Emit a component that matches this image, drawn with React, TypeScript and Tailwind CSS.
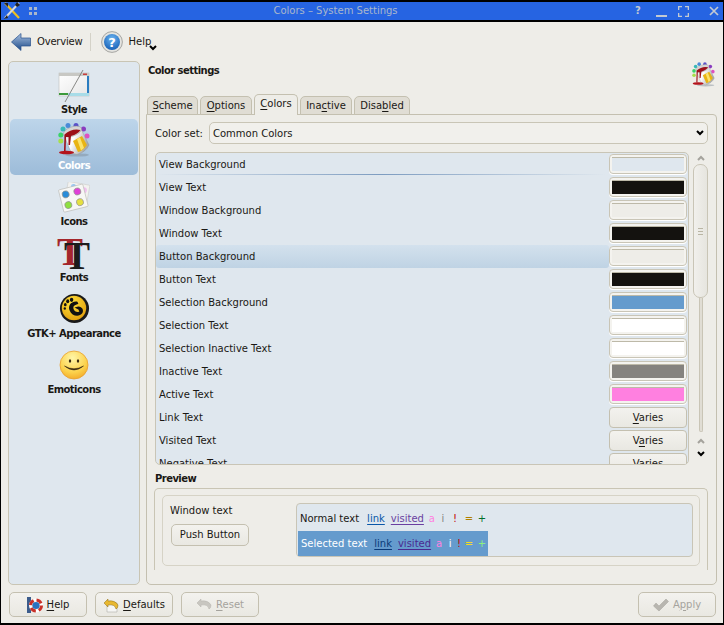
// Farbeinstellungen im KDE-Stil: Seitenleiste, Reiter, Farbliste und Vorschau.
import type { ReactNode } from 'react'

const FONT = 'font-["DejaVu_Sans",sans-serif]'

function Mn({ children }: { children: ReactNode }) {
  return <span className="underline underline-offset-2">{children}</span>
}

function BucketIcon({ size = 32, className = '' }: { size?: number; className?: string }) {
  return (
    <svg width={size} height={size + 2} viewBox="0 0 32 34" className={className}>
      <defs>
        <linearGradient id="bucketBody" x1="0" y1="0" x2="1" y2="0.4">
          <stop offset="0" stopColor="#d8d8d8" />
          <stop offset="0.45" stopColor="#ffffff" />
          <stop offset="1" stopColor="#a8a8a8" />
        </linearGradient>
      </defs>
      <circle cx="2.8" cy="12" r="2.5" fill="#38d36a" />
      <circle cx="2.8" cy="18" r="2.5" fill="#a6e04a" />
      <circle cx="5" cy="6" r="2.5" fill="#38b8b8" />
      <circle cx="10" cy="2.6" r="2.5" fill="#4a8ad8" />
      <circle cx="18" cy="2.6" r="2.5" fill="#5a52c8" />
      <circle cx="25.5" cy="6" r="2.5" fill="#8a3cc0" />
      <circle cx="29" cy="13" r="2.5" fill="#e050c0" />
      <ellipse cx="19" cy="32" rx="12" ry="1.6" fill="#7c8a96" opacity="0.45" />
      <path d="M6 12 L23 6 L31 22 Q28 29 19 31.5 Q14 31 12 27 Z" fill="url(#bucketBody)" stroke="#8a8a8a" strokeWidth="0.4" />
      <path d="M15 18 L24 13 L29 22 Q25 28 20 29 Z" fill="#e8b414" />
      <path d="M19 16 L22 14.5 L26 25 L23 27.5 Z" fill="#fbe36c" />
      <ellipse cx="14.5" cy="8.5" rx="9.5" ry="4.6" transform="rotate(-20 14.5 8.5)" fill="#d6d6d4" stroke="#909090" strokeWidth="0.4" />
      <path d="M6.5 11.5 Q14 5 22.5 7 Q20 11 13 13 L12 22 L10.5 22 L10.5 14 L8 14 L7.6 28 L6 28 Z" fill="#9c1018" />
      <ellipse cx="8.5" cy="29.5" rx="7.5" ry="1.8" fill="#b4141c" />
    </svg>
  )
}

function StyleIcon() {
  return (
    <svg width="32" height="32" viewBox="0 1 32 32">
      <defs>
        <linearGradient id="styleWin" x1="0" y1="0" x2="1" y2="1">
          <stop offset="0" stopColor="#ffffff" />
          <stop offset="1" stopColor="#e6e6e6" />
        </linearGradient>
      </defs>
      <rect x="1" y="4" width="30" height="23" fill="url(#styleWin)" stroke="#c0c0bc" strokeWidth="0.6" />
      <rect x="1" y="4" width="30" height="3" fill="#c8c8c4" />
      <rect x="25" y="4.5" width="4" height="1.5" fill="#c83c3c" />
      <rect x="29" y="7" width="2" height="17" fill="#2a7cc0" />
      <rect x="10" y="24" width="21" height="3" fill="#a8dce8" />
      <rect x="1" y="24" width="9" height="2" fill="#3c9a3c" />
      <path d="M25 1 L7 33" stroke="#7c7c78" strokeWidth="0.9" />
    </svg>
  )
}

function IconsIcon() {
  return (
    <svg width="32" height="32" viewBox="0 1 32 32">
      <g transform="rotate(10 18 14)">
        <rect x="8" y="2" width="22" height="22" rx="1" fill="#f2f2f0" stroke="#c8c8c4" strokeWidth="0.5" />
        <circle cx="14" cy="6" r="2.5" fill="#9cc8f0" />
        <circle cx="25" cy="8" r="3" fill="#f0c0ee" />
      </g>
      <g transform="rotate(-14 14 18)">
        <rect x="3" y="6" width="25" height="23" rx="1" fill="#f7f7f5" stroke="#b8b8b4" strokeWidth="0.6" />
        <circle cx="9" cy="12" r="3.4" fill="#2a8cd8" stroke="#8c8c88" strokeWidth="0.7" />
        <circle cx="21" cy="12" r="3.4" fill="#e040d8" stroke="#8c8c88" strokeWidth="0.7" />
        <circle cx="9" cy="23" r="3.4" fill="#8fe040" stroke="#8c8c88" strokeWidth="0.7" />
        <circle cx="21" cy="23" r="3.4" fill="#e6e040" stroke="#8c8c88" strokeWidth="0.7" />
      </g>
    </svg>
  )
}

function FontsIcon() {
  // Die beiden T sind echter Text, nur versetzt gesetzt.
  return (
    <div className="relative h-8 w-8 font-['Liberation_Serif',serif] text-[39px] font-bold leading-8 tracking-normal">
      <span className="absolute -left-[1px] -top-[2px] text-[#a4262c]">T</span>
      <span className="absolute left-[6px] top-[2px] text-[#1c1c1c]">T</span>
    </div>
  )
}

function GtkIcon() {
  return (
    <svg width="31" height="31" viewBox="0 0 32 32" className="-mt-[1px]">
      <defs>
        <radialGradient id="gtkBall" cx="0.4" cy="0.3" r="0.8">
          <stop offset="0" stopColor="#ffe23c" />
          <stop offset="1" stopColor="#e09a08" />
        </radialGradient>
      </defs>
      <circle cx="16" cy="16" r="15" fill="#1a1a1a" />
      <circle cx="15.5" cy="15.5" r="12.6" fill="url(#gtkBall)" />
      <ellipse cx="13" cy="7" rx="1.8" ry="2.2" fill="#111" />
      <ellipse cx="9" cy="8.5" rx="1.6" ry="2" fill="#111" />
      <ellipse cx="6.5" cy="12" rx="1.4" ry="1.7" fill="#111" />
      <ellipse cx="6" cy="16" rx="1.2" ry="1.4" fill="#111" />
      <path d="M19 9 C12 8 9 14 11 18 C13 24 21 25 24 21 C26 18 24 14 20 14 L16 15 L20 17 L21 19 C18 21 14 18 15 14 C16 12 19 12 20 11 Z" fill="#111" />
    </svg>
  )
}

function SmileIcon() {
  return (
    <svg width="32" height="32" viewBox="0 1 32 32">
      <defs>
        <radialGradient id="smileBall" cx="0.45" cy="0.25" r="0.85">
          <stop offset="0" stopColor="#fff6a8" />
          <stop offset="0.6" stopColor="#fcd24c" />
          <stop offset="1" stopColor="#f0a020" />
        </radialGradient>
      </defs>
      <circle cx="16" cy="16" r="14" fill="url(#smileBall)" stroke="#e8a030" strokeWidth="0.8" />
      <ellipse cx="12" cy="12" rx="1.2" ry="1.8" fill="#3a2a10" />
      <ellipse cx="20" cy="12" rx="1.2" ry="1.8" fill="#3a2a10" />
      <path d="M6.5 17 Q16 25 25.5 17 Q16 22.5 6.5 17 Z" fill="#3a2a10" stroke="#3a2a10" strokeWidth="0.5" />
    </svg>
  )
}

function ToolsIcon() {
  return (
    <svg width="18" height="18" viewBox="0 0 18 18">
      <path d="M2 1 L16 16" stroke="#f0c020" strokeWidth="2.2" />
      <path d="M16 1 L2 16" stroke="#d8d8d8" strokeWidth="2" />
      <path d="M1 1 L5 1 L5 5 Z" fill="#222" />
      <path d="M14 0 L17 3 L14 5 L12 3 Z" fill="#222" />
      <path d="M4 13 L1 17 L5 16 Z" fill="#222" />
    </svg>
  )
}

function BackArrow() {
  return (
    <svg width="20" height="20" viewBox="0 0 20 20">
      <defs>
        <linearGradient id="backArrow" x1="0" y1="0" x2="0" y2="1">
          <stop offset="0" stopColor="#a8c0e0" />
          <stop offset="1" stopColor="#1c4a88" />
        </linearGradient>
      </defs>
      <path d="M0.5 10 L10 1.5 L10 6 L19.5 6 L19.5 14 L10 14 L10 18.5 Z" fill="url(#backArrow)" stroke="#28528c" strokeWidth="0.7" />
    </svg>
  )
}

function HelpCircle() {
  return (
    <svg width="22" height="22" viewBox="0 0 22 22">
      <defs>
        <radialGradient id="helpBall" cx="0.5" cy="0.3" r="0.8">
          <stop offset="0" stopColor="#6cb4f0" />
          <stop offset="1" stopColor="#0c56b0" />
        </radialGradient>
      </defs>
      <circle cx="11" cy="11" r="10.4" fill="#e4e4e0" stroke="#8a8a86" strokeWidth="0.7" />
      <circle cx="11" cy="11" r="8" fill="url(#helpBall)" />
      <text x="11" y="15.5" textAnchor="middle" fontSize="13" fontWeight="700" fill="#fff" fontFamily="DejaVu Sans">?</text>
    </svg>
  )
}

function LifeBuoy() {
  return (
    <svg width="16" height="16" viewBox="0 0 16 16">
      <rect x="0" y="0" width="4" height="16" fill="#3c5c8c" />
      <circle cx="9" cy="8.5" r="5.5" fill="none" stroke="#ffffff" strokeWidth="3" />
      <circle cx="9" cy="8.5" r="5.5" fill="none" stroke="#c83028" strokeWidth="3" strokeDasharray="5.6 3" />
      <circle cx="9" cy="8.5" r="3.6" fill="#2a72c0" />
    </svg>
  )
}

function UndoIcon({ muted = false }: { muted?: boolean }) {
  const farbe = muted ? '#c8c6c0' : '#e8b830'
  return (
    <svg width="16" height="16" viewBox="0 0 16 16">
      {!muted && <path d="M4 6 L14 6 L14 15 L4 15 Z" fill="#f6f6f4" stroke="#b0b0aa" strokeWidth="0.6" />}
      <path d="M1 6 L5 2 L5 4 Q12 3 15 8 Q15 11 13 12 Q12 7 5 8 L5 10 Z" fill={farbe} stroke={muted ? '#b4b2ac' : '#8a6a14'} strokeWidth="0.5" />
    </svg>
  )
}

function CheckIcon() {
  return (
    <svg width="16" height="14" viewBox="0 0 16 14">
      <path d="M0.5 8 L3 5 L6 8 L13 1 L15.5 3.5 L6 13 Z" fill="#b8b6b0" stroke="#a4a29c" strokeWidth="0.5" />
    </svg>
  )
}

function Chevron({ up = false, className = '' }: { up?: boolean; className?: string }) {
  return (
    <svg width="8" height="6" viewBox="0 0 8 6" className={className}>
      <path d={up ? 'M1 5 L4 2 L7 5' : 'M1 1 L4 4 L7 1'} fill="none" stroke="currentColor" strokeWidth="2" />
    </svg>
  )
}

const seitenleiste: { label: string; icon: ReactNode; aktiv?: boolean }[] = [
  { label: 'Style', icon: <StyleIcon /> },
  { label: 'Colors', icon: <BucketIcon className="-mt-[3px]" />, aktiv: true },
  { label: 'Icons', icon: <IconsIcon /> },
  { label: 'Fonts', icon: <FontsIcon /> },
  { label: 'GTK+ Appearance', icon: <GtkIcon /> },
  { label: 'Emoticons', icon: <SmileIcon /> },
]

const farben: { label: string; farbe?: string; knopf?: ReactNode }[] = [
  { label: 'View Background', farbe: '#dfe7ee' },
  { label: 'View Text', farbe: '#14120f' },
  { label: 'Window Background', farbe: '#eeede8' },
  { label: 'Window Text', farbe: '#14120f' },
  { label: 'Button Background', farbe: '#eeede8' },
  { label: 'Button Text', farbe: '#14120f' },
  { label: 'Selection Background', farbe: '#659bcd' },
  { label: 'Selection Text', farbe: '#ffffff' },
  { label: 'Selection Inactive Text', farbe: '#ffffff' },
  { label: 'Inactive Text', farbe: '#85837f' },
  { label: 'Active Text', farbe: '#ff80e0' },
  { label: 'Link Text', knopf: <><Mn>V</Mn>aries</> },
  { label: 'Visited Text', knopf: <>V<Mn>a</Mn>ries</> },
  { label: 'Negative Text', knopf: <>Varies</> },
]

function Swatch({ farbe }: { farbe: string }) {
  return (
    <div className="-mt-px flex h-[20px] w-[78px] rounded-[4px] border border-[#c9c5b6] bg-[#f4f3ef] p-[2px] shadow-[0_1px_0_#ffffff]">
      <div className="flex-1 border-t border-[#bdb9a8]" style={{ backgroundColor: farbe }} />
    </div>
  )
}

function KnopfRahmen({ children, breite, gedimmt }: { children: ReactNode; breite: string; gedimmt?: boolean }) {
  return (
    <button
      className={`flex h-[25px] items-center justify-center gap-[4px] rounded-[5px] border border-[#c4c0b0] bg-gradient-to-b from-[#f3f2ee] to-[#e9e8e2] ${breite} ${gedimmt ? 'text-[#a5a39d]' : 'text-[#1a1814]'}`}
    >
      {children}
    </button>
  )
}

const reiter = [
  { text: <><Mn>S</Mn>cheme</>, breite: 'w-[51px]' },
  { text: <><Mn>O</Mn>ptions</>, breite: 'w-[52px]' },
  { text: <><Mn>C</Mn>olors</>, breite: 'w-[44px]', aktiv: true },
  { text: <>Ina<Mn>c</Mn>tive</>, breite: 'w-[52px]' },
  { text: <>Disa<Mn>b</Mn>led</>, breite: 'w-[56px]' },
]

const BOLD = 'font-bold tracking-[-0.55px]'

export default function App() {
  return (
    <div className={`flex h-[625px] w-[724px] flex-col overflow-hidden border-x border-t-2 border-b-2 border-black bg-[#eeede8] text-[10px] leading-none text-[#1a1814] ${FONT}`}>
      {/* Titelleiste */}
      <div className="flex h-[18px] shrink-0 items-center bg-[#2664e2] text-[#a9b7cb]">
        <div className="ml-[2px] flex w-[18px] justify-center"><ToolsIcon /></div>
        <div className="ml-[8px] grid grid-cols-2 gap-[2px]">
          <span className="h-[3px] w-[3px] bg-[#a9b7cb]" />
          <span className="h-[3px] w-[3px] bg-[#a9b7cb]" />
          <span className="h-[3px] w-[3px] bg-[#a9b7cb]" />
          <span className="h-[3px] w-[3px] bg-[#a9b7cb]" />
        </div>
        <div className="flex-1 text-center">Colors – System Settings</div>
        <div className="flex items-center text-[#c3cad2]">
          <span className="w-[8px] text-center text-[10px] font-bold">?</span>
          <span className="ml-[14px] mt-[9px] h-[2px] w-[11px] bg-[#c3cad2]" />
          <svg width="11" height="11" viewBox="0 0 11 11" className="ml-[11px]">
            <path d="M0.5 4 V0.5 H4 M7 0.5 H10.5 V4 M10.5 7 V10.5 H7 M4 10.5 H0.5 V7" fill="none" stroke="#c3cad2" strokeWidth="1.6" />
          </svg>
          <svg width="10" height="10" viewBox="0 0 10 10" className="ml-[20px] mr-[4px]">
            <path d="M1 1 L9 9 M9 1 L1 9" stroke="#c3cad2" strokeWidth="1.7" />
          </svg>
        </div>
      </div>
      <div className="h-[2px] shrink-0 bg-black" />

      {/* Werkzeugleiste */}
      <div className="flex h-[39px] shrink-0 items-center pl-[10px]">
        <BackArrow />
        <span className="ml-[6px] tracking-[-0.2px]">Overview</span>
        <span className="ml-[8px] h-[18px] w-px bg-[#d4d2c8]" />
        <div className="ml-[10px]"><HelpCircle /></div>
        <span className="ml-[5px]">Help</span>
        <Chevron className="-ml-[2px] mt-[13px] text-black" />
      </div>

      <div className="flex min-h-0 flex-1 pl-[7px] pr-[6px]">
        {/* Seitenleiste */}
        <aside className="flex w-[132px] flex-col rounded-[5px] border border-[#c9c5b4] bg-[#dfe7ee] px-[1px] pt-[1px]">
          {seitenleiste.map((s) => (
            <div
              key={s.label}
              className={`flex h-[56px] flex-col items-center rounded-[5px] pt-[7px] ${BOLD} ${s.aktiv ? 'bg-gradient-to-b from-[#bdd5ea] to-[#9dbcd9] text-white' : ''}`}
            >
              <div className="h-[32px]">{s.icon}</div>
              <div className="mt-[3px]">{s.label}</div>
            </div>
          ))}
        </aside>

        {/* Inhalt */}
        <main className="ml-[6px] flex min-w-0 flex-1 flex-col">
          <div className="flex h-[33px] shrink-0 items-start justify-between pl-[2px] pt-[3px]">
            <span className={`mt-[2px] ${BOLD}`}>Color settings</span>
            <div className="mr-[2px] mt-[-2px]"><BucketIcon size={23} /></div>
          </div>

          <div className="z-10 -mb-px flex items-end gap-[2px] pl-[1px]">
            {reiter.map((r, i) => (
              <div
                key={i}
                className={`flex items-center justify-center rounded-t-[5px] border border-[#c4c0b0] ${r.breite} ${r.aktiv ? 'h-[21px] border-b-0 bg-[#eeede8] pb-[2px]' : 'h-[19px] bg-[#e0ddd4]'}`}
              >
                <span>{r.text}</span>
              </div>
            ))}
          </div>

          <div className="flex min-h-0 flex-1 flex-col rounded-b-[5px] rounded-tr-[4px] border border-[#c4c0b0] px-[8px] pt-[7px]">
            <div className="flex h-[22px] shrink-0 items-center">
              <span className="w-[54px] pt-[2px]">Color set:</span>
              <div className="flex h-full flex-1 items-center justify-between rounded-[5px] border border-[#c9c5b6] bg-[#f1f0ec] pl-[3px] pr-[2px]">
                <span className="pt-[2px]">Common Colors</span>
                <Chevron className="mr-[1px] text-black" />
              </div>
            </div>

            <div className="mt-[8px] flex h-[313px] shrink-0">
              <div className="relative h-full w-[534px] overflow-hidden rounded-[5px] border border-[#c9c5b6] bg-[#dfe7ee]">
                {farben.map((f) => (
                  <div key={f.label} className="flex h-[23px] items-center">
                    <span className={`flex h-full flex-1 items-center pl-[3px] ${f.label === 'Button Background' ? 'rounded-[3px] bg-gradient-to-b from-[#d3e1ed] to-[#bfd3e4]' : ''}`}>{f.label}</span>
                    <div className="mr-[1px] w-[78px] shrink-0">
                      {f.farbe ? (
                        <Swatch farbe={f.farbe} />
                      ) : (
                        <div className="flex h-[21px] w-[78px] items-center justify-center rounded-[4px] border border-[#c4c0b0] bg-gradient-to-b from-[#f3f2ee] to-[#e9e8e2]">
                          <span>{f.knopf}</span>
                        </div>
                      )}
                    </div>
                  </div>
                ))}
                <div className="absolute left-0 top-[21px] h-px w-[450px] bg-gradient-to-r from-transparent via-[#7d9cc0] to-transparent" />
              </div>

              {/* Bildlaufleiste */}
              <div className="ml-[4px] flex w-[15px] flex-col items-center">
                <Chevron up className="mt-[3px] text-[#a5a39d]" />
                <div className="mt-[3px] flex h-[134px] w-[15px] items-center justify-center rounded-[7px] border border-[#c9c5b6] bg-gradient-to-r from-[#f1f0ec] to-[#e6e5df]">
                  <div className="flex flex-col gap-[2px]">
                    <span className="h-px w-[5px] bg-[#b9b5a4]" />
                    <span className="h-px w-[5px] bg-[#b9b5a4]" />
                    <span className="h-px w-[5px] bg-[#b9b5a4]" />
                  </div>
                </div>
                <div className="h-[134px] w-[4px] rounded-b-[2px] border-x border-b border-[#c9c5b6] bg-[#e0ddd4]" />
                <Chevron up className="mt-[6px] text-[#a5a39d]" />
                <Chevron className="mt-[7px] text-black" />
              </div>
            </div>

            <div className={`mt-[9px] shrink-0 ${BOLD}`}>Preview</div>
            <div className="-ml-[1px] mt-[4px] h-[82px] rounded-t-[5px] border-x border-t border-[#c9c5b4] px-[7px] pt-[6px]">
              <div className="flex h-[71px] rounded-[5px] border border-[#d6d3c6] pl-[7px] pr-[6px]">
                <div className="w-[126px] shrink-0">
                  <div className="mt-[10px]">Window text</div>
                  <div className="ml-[1px] mt-[8px] flex h-[22px] w-[78px] items-center justify-center rounded-[5px] border border-[#c4c0b0] bg-gradient-to-b from-[#f3f2ee] to-[#e9e8e2]">
                    Push Button
                  </div>
                </div>
                <div className="mt-[7px] h-[54px] flex-1 rounded-[4px] border border-[#c9c5b6] bg-[#dfe7ee]">
                  <div className="flex h-[27px] items-center whitespace-nowrap pl-[3px] pt-[2px]">
                    <span>Normal text</span>
                    <a className="ml-[8px] text-[#0a57a8] underline underline-offset-2">link</a>
                    <a className="ml-[6px] text-[#6a3fa0] underline underline-offset-2">visited</a>
                    <span className="ml-[2px] w-[12px] text-center text-[#ff80e0]">a</span>
                    <span className="w-[10px] text-center text-[#85837f]">i</span>
                    <span className="ml-[1px] w-[12px] text-center text-[#bf0303]">!</span>
                    <span className="ml-[1px] w-[14px] text-center text-[#b08000]">=</span>
                    <span className="w-[12px] text-center text-[#006e28]">+</span>
                  </div>
                  <div className="ml-[1px] flex h-[25px] w-[190px] items-center whitespace-nowrap bg-[#659bcd] pl-[3px] text-white">
                    <span>Selected text</span>
                    <a className="ml-[7px] text-[#0a3a78] underline underline-offset-2">link</a>
                    <a className="ml-[6px] text-[#4a2a90] underline underline-offset-2">visited</a>
                    <span className="ml-[2px] w-[12px] text-center text-[#ff80e0]">a</span>
                    <span className="w-[10px] text-center">i</span>
                    <span className="w-[8px] text-center text-[#bf0303]">!</span>
                    <span className="w-[12px] text-center text-[#f8dc20]">=</span>
                    <span className="ml-[1px] w-[12px] text-center text-[#8cf080]">+</span>
                  </div>
                </div>
              </div>
            </div>
          </div>
        </main>
      </div>

      {/* Knopfleiste */}
      <div className="flex h-[38px] shrink-0 items-start justify-between pl-[8px] pr-[7px] pt-[7px]">
        <div className="flex gap-[8px]">
          <KnopfRahmen breite="w-[78px]"><LifeBuoy /><span><Mn>H</Mn>elp</span></KnopfRahmen>
          <KnopfRahmen breite="w-[78px]"><UndoIcon /><span><Mn>D</Mn>efaults</span></KnopfRahmen>
          <KnopfRahmen breite="w-[78px]" gedimmt><UndoIcon muted /><span><Mn>R</Mn>eset</span></KnopfRahmen>
        </div>
        <KnopfRahmen breite="w-[78px]" gedimmt><CheckIcon /><span>A<Mn>p</Mn>ply</span></KnopfRahmen>
      </div>
    </div>
  )
}
